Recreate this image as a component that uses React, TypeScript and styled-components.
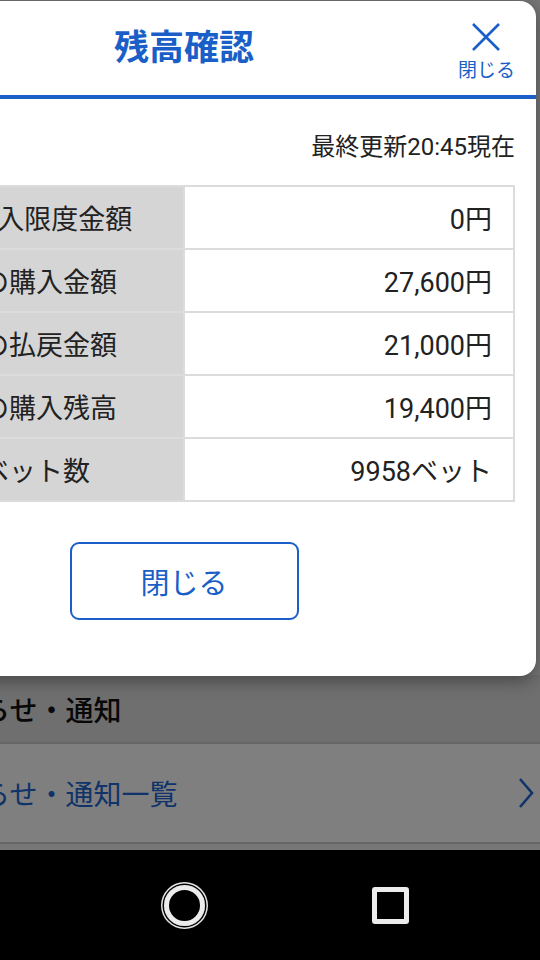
import React from 'react';
import styled, { createGlobalStyle } from 'styled-components';

const GlobalStyle = createGlobalStyle`
  html, body {
    margin: 0;
    padding: 0;
    width: 540px;
    height: 960px;
    overflow: hidden;
    background: #000;
  }
  body {
    font-family: Roboto, "Noto Sans CJK JP", sans-serif;
  }
  * {
    box-sizing: border-box;
  }
`;

const BLUE = '#1a5fc8';

const rows = [
  { label: '1日購入限度金額', value: '0円' },
  { label: '本日の購入金額', value: '27,600円' },
  { label: '本日の払戻金額', value: '21,000円' },
  { label: '本日の購入残高', value: '19,400円' },
  { label: '購入ベット数', value: '9958ベット' },
];

// the phone screen is wider than the captured area, so it is shifted left
const Screen = styled.div`
  width: 712px;
  height: 960px;
  margin-left: -172px;
  display: flex;
  flex-direction: column;
`;

const Page = styled.div`
  position: relative;
  flex: 1;
  display: flex;
  flex-direction: column;
  background: #efefef;
`;

const PageBody = styled.div`
  flex: 1;
`;

const SectionHeader = styled.div`
  height: 69px;
  display: flex;
  align-items: center;
  padding-left: 98px;
  background: #dedede;
  border-bottom: 2px solid #cdcdcd;
  color: #111;
  font-size: 28px;
  font-weight: 500;
`;

const ListRow = styled.div`
  height: 100px;
  display: flex;
  align-items: center;
  justify-content: space-between;
  padding: 0 6px 0 98px;
  background: #fff;
  border-bottom: 2px solid #cdcdcd;
  color: #2166d2;
  font-size: 28px;
`;

const PageFoot = styled.div`
  height: 6px;
`;

const Dim = styled.div`
  position: absolute;
  inset: 0;
  background: rgba(0, 0, 0, 0.5);
`;

const Modal = styled.div`
  position: absolute;
  top: 1px;
  left: 4px;
  right: 4px;
  background: #fff;
  border-radius: 16px;
  box-shadow: 0 4px 18px rgba(0, 0, 0, 0.4);
  padding-bottom: 56px;
`;

const ModalHead = styled.div`
  height: 98px;
  display: grid;
  grid-template-columns: 1fr auto 1fr;
  align-items: center;
  padding: 0 21px;
  border-bottom: 4px solid ${BLUE};
`;

const Title = styled.h2`
  grid-column: 2;
  margin: 0;
  color: ${BLUE};
  font-size: 35px;
  font-weight: 700;
  line-height: 1;
`;

const CloseButton = styled.button`
  grid-column: 3;
  justify-self: end;
  margin-top: 8px;
  padding: 0;
  border: none;
  background: none;
  display: flex;
  flex-direction: column;
  align-items: center;
  gap: 9px;
  color: ${BLUE};
  font-family: inherit;
  font-size: 19px;
  line-height: 1.1;
`;

const Updated = styled.div`
  margin-top: 31px;
  padding-right: 21px;
  text-align: right;
  color: #222;
  font-size: 24px;
  line-height: 34px;
`;

const Table = styled.div`
  margin: 21px 21px 0;
  display: grid;
  grid-template-columns: 1fr 1fr;
  border-top: 2px solid #dcdcdc;
  border-left: 2px solid #dcdcdc;
`;

const Cell = styled.div<{ $head?: boolean }>`
  height: 63px;
  display: flex;
  align-items: center;
  justify-content: ${(p) => (p.$head ? 'flex-start' : 'flex-end')};
  padding: ${(p) => (p.$head ? '0 0 0 73px' : '0 21px 0 0')};
  background: ${(p) => (p.$head ? '#d5d5d5' : '#fff')};
  border-right: 2px solid #dcdcdc;
  border-bottom: 2px solid #dcdcdc;
  color: #222;
  font-size: 27px;
  white-space: nowrap;
`;

const Footer = styled.div`
  display: flex;
  justify-content: center;
  margin-top: 40px;
`;

const OutlineButton = styled.button`
  width: 229px;
  height: 78px;
  border: 2px solid ${BLUE};
  border-radius: 9px;
  background: #fff;
  color: ${BLUE};
  font-family: inherit;
  font-size: 29px;
`;

const NavBar = styled.div`
  height: 110px;
  background: #000;
  display: flex;
  align-items: center;
  justify-content: center;
  gap: 146px;
`;

const NavSlot = styled.div`
  width: 60px;
  display: flex;
  justify-content: center;
  align-items: center;
`;

const HomeKey = styled.div`
  width: 41px;
  height: 41px;
  border-radius: 50%;
  border: 5px solid #ececec;
  box-shadow: 0 0 0 1.5px #000, 0 0 0 3px #e4e4e4;
`;

const RecentKey = styled.div`
  width: 37px;
  height: 37px;
  border-radius: 3px;
  border: 5px solid #ececec;
`;

export default function App() {
  return (
    <>
      <GlobalStyle />
      <Screen>
        <Page>
          <PageBody />
          <SectionHeader>お知らせ・通知</SectionHeader>
          <ListRow>
            <span>お知らせ・通知一覧</span>
            <svg width="16" height="32" viewBox="0 0 16 32" fill="none">
              <path d="M2 2 L14 16 L2 30" stroke="#2166d2" strokeWidth="2.6" />
            </svg>
          </ListRow>
          <PageFoot />
          <Dim />
          <Modal>
            <ModalHead>
              <Title>残高確認</Title>
              <CloseButton>
                <svg width="30" height="30" viewBox="0 0 30 30" fill="none">
                  <path d="M2 2 L28 28 M28 2 L2 28" stroke={BLUE} strokeWidth="2.6" />
                </svg>
                閉じる
              </CloseButton>
            </ModalHead>
            <Updated>最終更新20:45現在</Updated>
            <Table>
              {rows.map((r) => (
                <React.Fragment key={r.label}>
                  <Cell $head>{r.label}</Cell>
                  <Cell>{r.value}</Cell>
                </React.Fragment>
              ))}
            </Table>
            <Footer>
              <OutlineButton>閉じる</OutlineButton>
            </Footer>
          </Modal>
        </Page>
        <NavBar>
          <NavSlot>
            <svg width="36" height="40" viewBox="0 0 36 40" fill="none">
              <path d="M32 4 L4 20 L32 36 Z" stroke="#ececec" strokeWidth="4.5" strokeLinejoin="round" />
            </svg>
          </NavSlot>
          <NavSlot>
            <HomeKey />
          </NavSlot>
          <NavSlot>
            <RecentKey />
          </NavSlot>
        </NavBar>
      </Screen>
    </>
  );
}
